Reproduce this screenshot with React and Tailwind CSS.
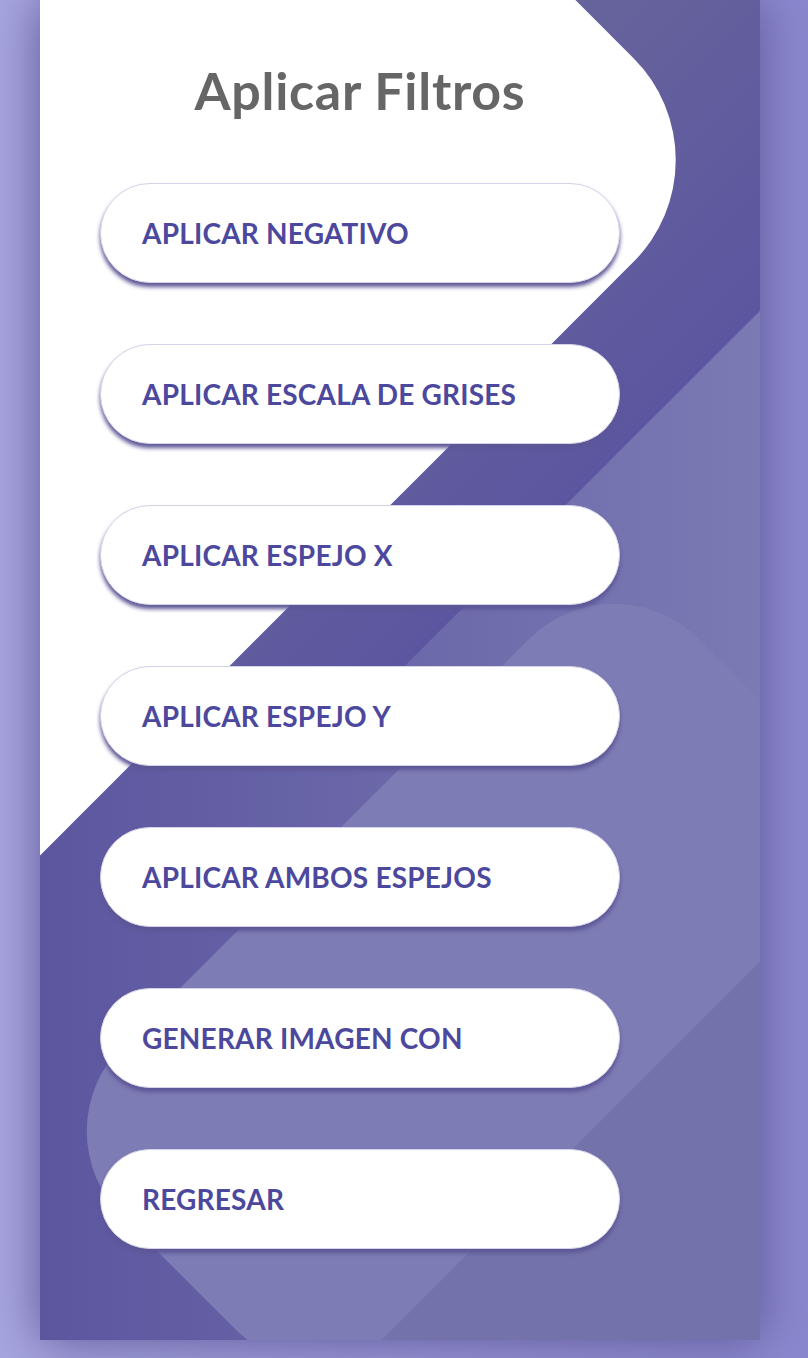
import React from 'react';

// Liste des filtres affichés sous forme de boutons
const filtros = [
  'Aplicar negativo',
  'Aplicar escala de grises',
  'Aplicar espejo X',
  'Aplicar espejo Y',
  'Aplicar ambos espejos',
  'Generar imagen con',
  'Regresar',
];

// Formes décoratives du fond de la carte
const Fondo = () => (
  <div className="absolute inset-0 overflow-hidden">
    {/* Bande sombre */}
    <div className="absolute left-[340px] top-[-308px] w-[380px] h-[1080px] rotate-45 rounded-[64px] bg-[linear-gradient(270deg,#5C56A0,#67659B)]" />
    {/* Forme blanche */}
    <div className="absolute left-[-560px] top-[-360px] w-[1040px] h-[1040px] rotate-45 rounded-tr-[144px] bg-white" />
    {/* Forme claire arrondie */}
    <div className="absolute left-[227px] top-[576px] w-[400px] h-[816px] rotate-45 rounded-[120px] bg-[#7E7CB5]" />
    {/* Coin inférieur droit */}
    <div className="absolute left-[603px] top-[425px] w-[600px] h-[1556px] rotate-45 bg-[#7472AB]" />
  </div>
);

const App = () => {
  return (
    <div
      className="w-full h-[1358px] bg-[linear-gradient(90deg,#A8A6E0,#8B87CE)] overflow-hidden"
      style={{ fontFamily: 'Lato, "Open Sans", sans-serif' }}
    >
      <div className="relative ml-[40px] w-[720px] h-[1340px] overflow-hidden bg-[linear-gradient(90deg,#5C569F,#7B7AB4)] shadow-[0_0_48px_#5C5696]">
        <Fondo />
        <div className="relative z-10 pl-[60px] pt-[59px] w-[580px]">
          <h1 className="text-[52px] leading-[1.2] font-bold tracking-[0.7px] text-[#666666] text-center">
            Aplicar Filtros
          </h1>
          <div className="mt-[62px] flex flex-col gap-[61px]">
            {filtros.map((f) => (
              <button
                key={f}
                className="w-[520px] h-[100px] flex items-center px-[41px] bg-white rounded-full border border-[#D4D3E8] shadow-[0_4px_4px_#5C5696] text-[28px] font-bold uppercase tracking-[0.2px] text-[#4C489D] text-left"
              >
                {f}
              </button>
            ))}
          </div>
        </div>
      </div>
    </div>
  );
};

export default App;
